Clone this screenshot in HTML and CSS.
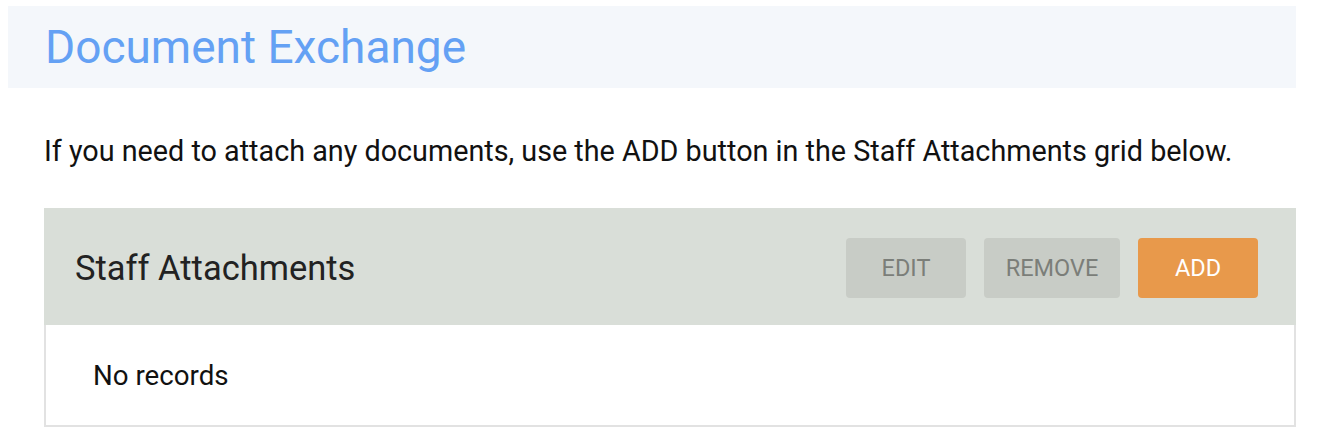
FILE: index.html
```html
<!DOCTYPE html>
<html>
<head>
<meta charset="utf-8">
<link rel="stylesheet" href="styles.css">
</head>
<body>
<div class="page">
  <header class="banner">
    <h1 class="title">Document Exchange</h1>
  </header>
  <div class="content">
    <p class="intro">If you need to attach any documents, use the ADD button in the Staff Attachments grid below.</p>
    <section class="grid">
      <div class="grid-head">
        <h2 class="grid-title">Staff Attachments</h2>
        <div class="actions">
          <button class="btn btn-disabled btn-edit">EDIT</button>
          <button class="btn btn-disabled btn-remove">REMOVE</button>
          <button class="btn btn-primary btn-add">ADD</button>
        </div>
      </div>
      <div class="grid-body">
        <span class="empty">No records</span>
      </div>
    </section>
  </div>
</div>
</body>
</html>
```
FILE: styles.css
```css
* { box-sizing: border-box; }
html, body { margin: 0; padding: 0; background: #ffffff; }
body { font-family: Roboto, "Liberation Sans", sans-serif; color: #111; }
.page { padding: 6px 26px 0 8px; }
.banner {
  background: #f4f7fb;
  height: 82px;
  display: flex;
  align-items: center;
  padding-left: 37px;
}
.title {
  margin: 0;
  font-size: 46px;
  font-weight: 400;
  color: #64a1f4;
}
.content { padding-left: 36px; }
.intro {
  margin: 0;
  padding-top: 46px;
  font-size: 28.75px;
  line-height: 34px;
  color: #111;
}
.grid {
  margin-top: 40px;
  border: 2px solid #e2e2e2;
}
.grid-head {
  background: #d9ded8;
  height: 117px;
  display: flex;
  align-items: center;
  justify-content: space-between;
  padding: 3px 38px 0 31px;
  margin: -2px -2px 0 -2px;
}
.grid-title {
  margin: 0;
  font-size: 34.5px;
  font-weight: 400;
  color: #222;
}
.actions { display: flex; gap: 18px; }
.btn {
  height: 60px;
  border: none;
  border-radius: 4px;
  font-family: Roboto, "Liberation Sans", sans-serif;
  font-size: 23.5px;
  padding: 0;
}
.btn-edit { width: 120px; }
.btn-remove { width: 136px; }
.btn-add { width: 120px; }
.btn-disabled { background: #c8ccc6; color: #7b7e79; }
.btn-primary { background: #e8994b; color: #ffffff; }
.grid-body {
  height: 100px;
  display: flex;
  align-items: center;
  padding-left: 47px;
}
.empty { font-size: 27.7px; color: #111; }
```
